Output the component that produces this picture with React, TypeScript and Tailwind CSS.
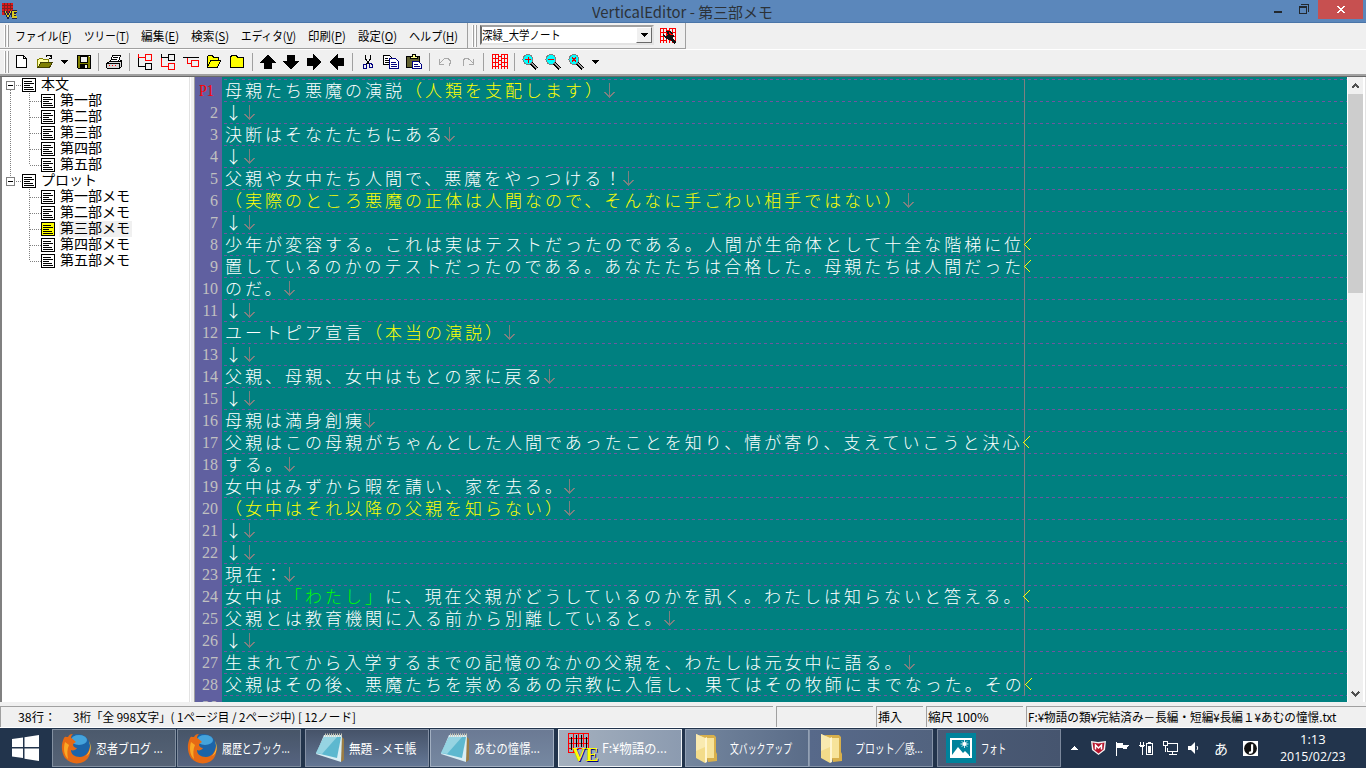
import { useLayoutEffect, useRef } from "react";
import type { ReactNode } from "react";

// Text squeezed or stretched to a fixed width
function Fit({ w, className = "", children }: { w: number; className?: string; children: ReactNode }) {
    const ref = useRef<HTMLSpanElement>(null);

    useLayoutEffect(() => {
        const el = ref.current;
        if (!el) return;
        el.style.transform = `scaleX(${w / el.offsetWidth})`;
    }, [w]);

    return (
        <span className={`block shrink-0 ${className}`} style={{ width: w }}>
            <span ref={ref} className="inline-block origin-left whitespace-pre">
                {children}
            </span>
        </span>
    );
}

const menus = [
    { label: "ファイル", key: "F", w: 57 },
    { label: "ツリー", key: "T", w: 45 },
    { label: "編集", key: "E", w: 38 },
    { label: "検索", key: "S", w: 38 },
    { label: "エディタ", key: "V", w: 55 },
    { label: "印刷", key: "P", w: 38 },
    { label: "設定", key: "O", w: 39 },
    { label: "ヘルプ", key: "H", w: 49 },
];

const tree = [
    { label: "本文", children: ["第一部", "第二部", "第三部", "第四部", "第五部"] },
    { label: "プロット", children: ["第一部メモ", "第二部メモ", "第三部メモ", "第四部メモ", "第五部メモ"] },
];
const selected = "第三部メモ";

type Line = { t: string; wrap?: boolean };

// （…） is drawn in yellow and 「…」 in green
const lines: Line[] = [
    { t: "母親たち悪魔の演説（人類を支配します）" },
    { t: "↓" },
    { t: "決断はそなたたちにある" },
    { t: "↓" },
    { t: "父親や女中たち人間で、悪魔をやっつける！" },
    { t: "（実際のところ悪魔の正体は人間なので、そんなに手ごわい相手ではない）" },
    { t: "↓" },
    { t: "少年が変容する。これは実はテストだったのである。人間が生命体として十全な階梯に位", wrap: true },
    { t: "置しているのかのテストだったのである。あなたたちは合格した。母親たちは人間だった", wrap: true },
    { t: "のだ。" },
    { t: "↓" },
    { t: "ユートピア宣言（本当の演説）" },
    { t: "↓" },
    { t: "父親、母親、女中はもとの家に戻る" },
    { t: "↓" },
    { t: "母親は満身創痍" },
    { t: "父親はこの母親がちゃんとした人間であったことを知り、情が寄り、支えていこうと決心", wrap: true },
    { t: "する。" },
    { t: "女中はみずから暇を請い、家を去る。" },
    { t: "（女中はそれ以降の父親を知らない）" },
    { t: "↓" },
    { t: "↓" },
    { t: "現在：" },
    { t: "女中は「わたし」に、現在父親がどうしているのかを訊く。わたしは知らないと答える。", wrap: true },
    { t: "父親とは教育機関に入る前から別離していると。" },
    { t: "↓" },
    { t: "生まれてから入学するまでの記憶のなかの父親を、わたしは元女中に語る。" },
    { t: "父親はその後、悪魔たちを崇めるあの宗教に入信し、果てはその牧師にまでなった。その", wrap: true },
];

function Svg({ children, w = 16, h = 16, className = "" }: { children: ReactNode; w?: number; h?: number; className?: string }) {
    return (
        <svg width={w} height={h} viewBox={`0 0 ${w} ${h}`} fill="none" shapeRendering="crispEdges" className={`shrink-0 ${className}`}>
            {children}
        </svg>
    );
}

function Btn({ children }: { children: ReactNode }) {
    return <div className="flex w-[23px] shrink-0 items-center justify-center pl-px">{children}</div>;
}

function Sep({ className = "w-2" }: { className?: string }) {
    return (
        <div className={`flex shrink-0 justify-center ${className}`}>
            <div className="h-[18px] w-px bg-[#a0a0a0]" />
        </div>
    );
}

function Grip() {
    return (
        <div className="flex h-[22px] w-[6px] shrink-0 gap-px">
            <div className="w-[2px] border-r border-[#a0a0a0] bg-white" />
            <div className="w-[2px] border-r border-[#a0a0a0] bg-white" />
        </div>
    );
}

function Caret() {
    return (
        <Svg w={7} h={4}>
            <path d="M0 0h7v1H0zM1 1h5v1H1zM2 2h3v1H2zM3 3h1v1H3z" fill="#000" />
        </Svg>
    );
}

function GridIcon() {
    return (
        <Svg>
            <path d="M0 .5h7M9 .5h7M0 4.5h7M9 4.5h7M0 8.5h7M9 8.5h7M0 12.5h7M9 12.5h7M.5 0v15M3.5 0v15M6.5 0v15M9.5 0v15M12.5 0v15M15.5 0v15M6 2.5h4M6 6.5h4M6 10.5h4" stroke="#f00" />
        </Svg>
    );
}

function ZoomIcon({ d, thick = false }: { d: string; thick?: boolean }) {
    return (
        <Svg>
            <path d="M9 9l6 6" stroke="#000" strokeWidth="3.6" />
            <path d="M10 9.5l5 5" stroke="#a0a0a0" strokeWidth="1.2" />
            <circle cx="6" cy="5.5" r="5" fill="#0ff" stroke="#808080" />
            <path d={d} stroke="#e00000" strokeWidth={thick ? 1.8 : 1} />
        </Svg>
    );
}

function Arrow({ turn }: { turn: string }) {
    return (
        <Svg className={turn}>
            <path d="M7 1h2v1h1v1h1v1h1v1h1v1h1v1h1v1h1v1h-4v6H4V9H0V8h1V7h1V6h1V5h1V4h1V3h1V2h1z" fill="#000" />
        </Svg>
    );
}

function TitleBar() {
    return (
        <div className="flex h-[23px] border-b border-[#4a75a8] bg-[#5b87bb]">
            <Svg w={18} h={17} className="mt-[2px] ml-[2px]">
                <rect y="1" width="11" height="12" fill="#e01818" />
                <path d="M0 3.5h11M0 6.5h11M0 9.5h11M2.5 1v12M5.5 1v12M8.5 1v12" stroke="#802020" />
                <path d="M3 9l3 6 3-6M10 9v6M10 9.5h5M10 12.5h4M10 15h5" stroke="#202040" strokeWidth="3" />
                <path d="M3 9l3 6 3-6M11 9v6M10 9.5h5M10 12.5h4M10 15h5" stroke="#d8c820" strokeWidth="1.3" />
            </Svg>
            <Fit w={181} className="ml-[572px] text-[15px] leading-[24px] text-[#2c3238]">VerticalEditor - 第三部メモ</Fit>
            <div className="flex-1" />
            <Svg w={9} h={3} className="mt-[11px] mr-[16px]">
                <path d="M0 0h8v2H0z" fill="#22282e" />
            </Svg>
            <Svg w={11} h={11} className="mt-[4px] mr-[8px]">
                <path d="M2 .5h7.5V8M.5 2v7.5h7V3" stroke="#22282e" />
                <path d="M0 3h8" stroke="#22282e" strokeWidth="2" />
            </Svg>
            <div className="mr-[3px] flex h-[19px] w-[45px] items-center justify-center bg-[#c75050]">
                <Svg w={8} h={7}>
                    <path d="M0 0h2v1h1v1h2V1h1V0h2v1H7v1H6v1H5v1h1v1h1v1h1v1H6V6H5V5H3v1H2v1H0V6h1V5h1V4h1V3H2V2H1V1H0z" fill="#fff" />
                </Svg>
            </div>
        </div>
    );
}

function MenuBar() {
    return (
        <div className="flex h-[27px] border-b border-white">
            <div className="flex w-[468px] border-r border-b border-[#a0a0a0] pt-[2px] pl-1">
                <Grip />
                <div className="ml-[5px] flex gap-3 text-[12px] leading-[21px]">
                    {menus.map((m) => (
                        <Fit key={m.key} w={m.w}>
                            {m.label}(<span className="underline underline-offset-2">{m.key}</span>)
                        </Fit>
                    ))}
                </div>
            </div>
            <div className="flex w-[218px] border-r border-b border-[#a0a0a0] pt-[2px] pl-1">
                <Grip />
                <div className="ml-[2px] flex h-[20px] w-[174px] border-2 border-[#e3e3e3] border-t-[#a0a0a0] border-l-[#696969] bg-white">
                    <Fit w={79} className="text-[12px] leading-[15px]">深緑_大学ノート</Fit>
                    <div className="ml-auto flex w-[16px] items-center justify-center border border-t-white border-r-[#696969] border-b-[#696969] border-l-white bg-[#f0f0f0]">
                        <Caret />
                    </div>
                </div>
                <div className="relative mt-[3px] ml-[6px] h-4 w-4">
                    <GridIcon />
                    <Svg className="absolute top-0 left-0">
                        <path d="M3 6l3 2 2-1-2-4h4l3 2 1 3-1 3 3 3-2 2-4-4-4-1-3-3z" fill="#111" />
                        <path d="M9 4l2 3 2-1" stroke="#f00" />
                    </Svg>
                </div>
            </div>
        </div>
    );
}

function Toolbar() {
    return (
        <div className="flex h-[24px] pl-1">
            <div className="w-[6px] shrink-0 pt-px"><Grip /></div>
            <Btn>
                <Svg>
                    <path d="M2.5 1.5h7l3 3v9h-10zM9.5 1.5v3h3" fill="#fff" stroke="#000" />
                </Svg>
            </Btn>
            <Btn>
                <Svg>
                    <path d="M.5 13.5v-8h1l1-1h3l1 1h5v3" fill="#ffffa0" stroke="#808000" />
                    <path d="M1 13.5l3-5h11.5l-3 5z" fill="#808000" stroke="#404000" />
                    <path d="M9 2.5l1-1h3l1 1M14.5 1v4M12 4.500h3" stroke="#000" />
                </Svg>
            </Btn>
            <div className="flex w-[16px] shrink-0 items-center justify-center"><Caret /></div>
            <Btn>
                <Svg>
                    <path d="M1.5 1.5h13v13h-12l-1-1z" fill="#808000" stroke="#000" />
                    <path d="M4.500 2h7v6h-7z" fill="#f0f0f0" stroke="#000" />
                    <path d="M4 10h8v4H4z" fill="#000" />
                    <path d="M9 11h2v3H9zM13 2h1v1h-1z" fill="#f0f0f0" />
                </Svg>
            </Btn>
            <Sep className="w-[7px] pt-[3px]" />
            <Btn>
                <Svg>
                    <path d="M4.5 7.5l2-6h8l-2 6" fill="#fff" stroke="#000" />
                    <path d="M7 3.5h5M6 5.5h5" stroke="#000" />
                    <path d="M.5 9.5l3-2h10l2-1v6l-2 2h-12l-1-1z" fill="#d8d8d8" stroke="#000" />
                    <path d="M1 9.5h12M13.5 9v5" stroke="#000" />
                    <path d="M3 11.5h9" stroke="#f00" strokeDasharray="1 2" />
                </Svg>
            </Btn>
            <Sep className="w-2 pt-[3px]" />
            <Btn>
                <Svg>
                    <path d="M1.5 4v8.5H8M8.5 9.5h6v6h-6z" stroke="#000" />
                    <path d="M1.500 0v4M1 3.5h7M8.5.5h6v6h-6z" stroke="#f00" />
                </Svg>
            </Btn>
            <Btn>
                <Svg>
                    <path d="M1.5 4v8.5H8M8.5 9.5h6v6h-6z" stroke="#f00" />
                    <path d="M1.500 0v4M1 3.5h7M8.5.5h6v6h-6z" stroke="#000" />
                </Svg>
            </Btn>
            <Btn>
                <Svg>
                    <path d="M0 3.5h16" stroke="#000" />
                    <path d="M4.5 4v5.5H9M8.5 6.5h7v6h-7z" stroke="#f00" />
                </Svg>
            </Btn>
            <Btn>
                <Svg>
                    <path d="M1.5 13.5v-11l1-1h4l1 2h5v3" fill="#ff0" stroke="#000" />
                    <path d="M1.5 13.5l3-7h10l-3 7z" fill="#ff0" stroke="#000" />
                </Svg>
            </Btn>
            <Btn>
                <Svg>
                    <path d="M1.5 13.5v-10l1-2h5l1 2h6v10z" fill="#ff0" stroke="#000" />
                </Svg>
            </Btn>
            <Sep className="w-2 pt-[3px]" />
            <Btn><Arrow turn="" /></Btn>
            <Btn><Arrow turn="rotate-180" /></Btn>
            <Btn><Arrow turn="rotate-90" /></Btn>
            <Btn><Arrow turn="-rotate-90" /></Btn>
            <Sep className="w-2 pt-[3px]" />
            <Btn>
                <Svg>
                    <path d="M5.5 1v4l4 5M10.5 1v4l-4 5" stroke="#000" />
                    <path d="M4 10.5h2v4H4l-1-1v-2zM9 9.5h2l1 1v3h-3z" stroke="#000080" />
                </Svg>
            </Btn>
            <Btn>
                <Svg>
                    <path d="M.5 1.5h6l2 2v7h-8z" fill="#fff" stroke="#000" />
                    <path d="M2 4.5h3M2 6.5h4M2 8.5h4" stroke="#000" />
                    <path d="M6.5 4.5h6l3 3v7h-9z" fill="#fff" stroke="#000080" />
                    <path d="M8 8.5h5M8 10.5h6M8 12.5h6" stroke="#000080" />
                </Svg>
            </Btn>
            <Btn>
                <Svg>
                    <path d="M.5 2.5h13v11H.5z" fill="#606030" stroke="#000" />
                    <path d="M4 4.5v-2h2v-2h3v2h2v2z" fill="#ffff90" stroke="#000" />
                    <path d="M6.5 7.5h6l3 3v4h-9z" fill="#fff" stroke="#000080" />
                    <path d="M8 10.5h4M8 12.5h6" stroke="#000080" />
                </Svg>
            </Btn>
            <Sep className="w-2 pt-[3px]" />
            <Btn>
                <Svg>
                    <path d="M2.5 5v5H7M3 9l3-3 2-1.5h3l2 2v3l-1 2" stroke="#a8a8a8" />
                </Svg>
            </Btn>
            <Btn>
                <Svg>
                    <path d="M13.5 5v5H9M13 9l-3-3-2-1.5H5l-2 2v3l1 2" stroke="#a8a8a8" />
                </Svg>
            </Btn>
            <Sep className="w-[9px] pt-[3px]" />
            <Btn><GridIcon /></Btn>
            <Sep className="w-[7px] pt-[3px]" />
            <Btn><ZoomIcon d="M3 5.5h6M6.500 3v6" /></Btn>
            <Btn><ZoomIcon d="M3 5.5h6" /></Btn>
            <Btn><ZoomIcon d="M4 3.5l4 4M8 3.5l-4 4" thick /></Btn>
            <div className="flex w-[16px] shrink-0 items-center justify-center"><Caret /></div>
        </div>
    );
}

function NodeIcon({ on = false }: { on?: boolean }) {
    return (
        <Svg w={14} h={14}>
            <rect x=".5" y=".5" width="13" height="13" fill={on ? "#ff0" : "#fff"} stroke="#000" />
            <path d="M2 3.5h8M2 5.5h10M2 7.5h6M2 9.5h9M2 11.5h10" stroke="#000" />
        </Svg>
    );
}

function Tree() {
    return (
        <div className="w-[190px] shrink-0 border-r border-l-2 border-r-[#e3e3e3] border-l-[#808080] bg-white pl-[4px] text-[14px] leading-[12px]">
            {tree.map((root, r) => (
                <div key={root.label}>
                    <div className="flex h-4 items-center">
                        <Svg w={16} h={16}>
                            <path d={r === 0 ? "M4.5 13v3" : "M4.5 0v4"} stroke="#808080" strokeDasharray="1 1" />
                            <path d="M.5 4.5h8v8h-8z" stroke="#808080" />
                            <path d="M2 8.5h5" stroke="#000" />
                            <path d="M10 8.5h6" stroke="#808080" strokeDasharray="1 1" />
                        </Svg>
                        <NodeIcon />
                        <Fit w={r === 0 ? 28 : 56} className="ml-[5px] h-4">{root.label}</Fit>
                    </div>
                    {root.children.map((c, i) => (
                        <div key={c} className="flex h-4 items-center">
                            <Svg w={35} h={16}>
                                {r === 0 && <path d="M4.5 0v16" stroke="#808080" strokeDasharray="1 1" />}
                                <path d={i === 4 ? "M23.5 0v8" : "M23.5 0v16"} stroke="#808080" strokeDasharray="1 1" />
                                <path d="M24 8.5h11" stroke="#808080" strokeDasharray="1 1" />
                            </Svg>
                            <NodeIcon on={c === selected} />
                            <div className={`ml-[4px] pr-[3px] ${c === selected ? "bg-[#f0f0f0]" : ""}`}>
                                <Fit w={c.length * 14} className="h-4 pl-px">{c}</Fit>
                            </div>
                        </div>
                    ))}
                </div>
            ))}
        </div>
    );
}

function EditorLine({ line }: { line: Line }) {
    const parts = line.t.split(/(（[^）]*）|「[^」]*」)/).filter(Boolean);
    return (
        <div className="flex h-[22px] shrink-0 pl-[3px] text-[17px] leading-[21px] font-light tracking-[3px]">
            {parts.map((p, i) => (
                <span key={i} className={p[0] === "（" ? "text-[#ffff00]" : p[0] === "「" ? "text-[#00ff00]" : "text-white"}>
                    {/* every character sits in its own 20px cell */}
                    {p === "↓" ? (
                        <span className="flex h-[22px] w-5">
                            <span className="w-[17px] text-center tracking-normal">↓</span>
                        </span>
                    ) : p}
                </span>
            ))}
            {line.wrap ? (
                <Svg w={7} h={13} className="mt-[5px]">
                    <path d="M6.5.5l-6 6 6 6" stroke="#ffff00" strokeWidth="1.2" />
                </Svg>
            ) : (
                <Svg w={11} h={16} className="-ml-px mt-[3px]">
                    <path d="M5.5 1v14M.5 10l5 5 5-5" stroke="#808080" />
                </Svg>
            )}
        </div>
    );
}

function Editor() {
    return (
        <div className="flex min-w-0 flex-1 overflow-hidden border-l border-[#a0a0a0] bg-[#008080]">
            <div className="w-[27px] shrink-0 bg-[#6060a0] pt-[2px] pr-[4px] text-right font-['Liberation_Serif',serif] text-[16px] leading-[24px] text-[#c0c0c0]">
                {[...Array(29)].map((_, i) => (
                    <div key={i} className="h-[22px]">
                        {i === 0 ? <Fit w={15} className="ml-[4px] text-left text-[#ff0000]">P1</Fit> : i + 1}
                    </div>
                ))}
            </div>
            <div className="relative flex-1 pt-[2px]">
                <div className="absolute top-[2px] left-0 h-[623px] w-full bg-[repeating-linear-gradient(90deg,transparent_0_2px,#7055a0_2px_5px,transparent_5px_6px)]">
                    <div className="h-full w-full bg-[repeating-linear-gradient(180deg,transparent_0_1px,#008080_1px_22px)]" />
                </div>
                <div className="absolute top-[2px] left-[802px] h-[617px] w-px bg-[#808080]" />
                <div className="relative">
                    {lines.map((l, i) => <EditorLine key={i} line={l} />)}
                </div>
            </div>
            <div className="flex w-[16px] flex-col items-center border-l border-white bg-[#f0f0f0]">
                <Svg w={9} h={6} className="mt-[6px]">
                    <path d="M1 5l3.5-3.5L8 5" stroke="#505050" strokeWidth="2" />
                </Svg>
                <div className="mt-[5px] h-[199px] w-full bg-[#cdcdcd]" />
                <Svg w={9} h={6} className="mt-auto mb-[5px]">
                    <path d="M1 1l3.5 3.5L8 1" stroke="#505050" strokeWidth="2" />
                </Svg>
            </div>
            <div className="w-[3px] border-r border-[#e3e3e3] bg-white" />
        </div>
    );
}

function StatusBar() {
    const cell = "h-[21px] shrink-0 border-t border-l border-[#a0a0a0] mr-[3px] flex";
    return (
        <div className="flex h-[26px] border-b border-white pt-[4px] text-[12px] leading-[19px]">
            <div className={`${cell} w-[773px] pl-[17px]`}>
                <Fit w={38}>38行：</Fit>
                <Fit w={283} className="ml-[17px]">3桁「全 998文字」( 1ページ目 / 2ページ中) [ 12ノード]</Fit>
            </div>
            <div className={`${cell} w-[97px]`} />
            <div className={`${cell} w-[47px] pl-px`}><Fit w={24}>挿入</Fit></div>
            <div className={`${cell} w-[97px] pl-px`}><Fit w={61}>縮尺 100%</Fit></div>
            <div className={`${cell} w-[340px] pl-px`}><Fit w={308}>F:¥物語の類¥完結済み－長編・短編¥長編１¥あむの憧憬.txt</Fit></div>
        </div>
    );
}

function Firefox() {
    return (
        <svg width="31" height="31" viewBox="0 0 31 31">
            <circle cx="16" cy="14.5" r="13.5" fill="#1c64a8" />
            <ellipse cx="18" cy="7" rx="8" ry="5" fill="#4fb3e8" opacity=".8" />
            <path d="M3 5C0 11 0 19 4 25c5 6 14 7 20 3 5-4 6-9 5-15-1 7-5 11-10 11-6 0-9-3-9-7 2 1 5 0 6-2-2 0-4-2-4-3 0-2 2-2 3-3-2-2-3-3-5-4 0-2 1-3 2-4-3 0-4 1-5 3-2 0-3-1-4 1z" fill="#e66a14" />
            <path d="M4 9c-2 7-1 13 3 17-1-5-1-10 1-14z" fill="#f9a825" />
            <path d="M28 8c2 6 1 11-3 15 5-2 6-10 3-15z" fill="#ffc233" />
        </svg>
    );
}

function Notepad() {
    return (
        <svg width="32" height="31" viewBox="0 0 32 31">
            <path d="M27 3l3 3v21l-3 2z" fill="#9b7d45" />
            <path d="M10 2h18l-1 27-25-8z" fill="#d9eef4" />
            <path d="M10 4h17l-4 21L2 20z" fill="#5db8cf" />
            <path d="M10 4h13L8 21l-6-1z" fill="#96d4e2" />
            <path d="M11 2h17" stroke="#c8c8b8" strokeWidth="3" strokeDasharray="1 1" />
        </svg>
    );
}

function VeIcon() {
    return (
        <svg width="32" height="32" viewBox="0 0 32 32" fill="none">
            <g shapeRendering="crispEdges">
                <path d="M1 1.5h21M1 6.5h21M1 11.5h21M1 16.5h21M1 20.5h8M1.5 1v20M6.5 1v20M11.5 1v14M16.5 1v14M21.5 1v16" stroke="#f00" />
                <path d="M4.5 5v13M9.5 3v12M14.5 3v12M19.5 5v12" stroke="#000" strokeWidth="1" />
            </g>
            <text x="6" y="30" fontFamily="Liberation Serif, serif" fontWeight="bold" fontSize="19" fill="#000080">VE</text>
            <text x="5" y="29" fontFamily="Liberation Serif, serif" fontWeight="bold" fontSize="19" fill="#ffff00">VE</text>
        </svg>
    );
}

function Folder() {
    return (
        <svg width="24" height="31" viewBox="0 0 24 31">
            <path d="M5 2h14l2 2v15l1 2v7l-9 1z" fill="#d8b04c" />
            <path d="M7 5h12v20H7z" fill="#f7e39a" />
            <path d="M1 1l9 4v25l-9-5z" fill="#f3dc8a" />
            <path d="M10 5l2-1v25l-2 1z" fill="#fff5cf" />
            <path d="M1 1l9 4v9L1 18z" fill="#f9eab0" />
        </svg>
    );
}

function Photo() {
    return (
        <svg width="30" height="30" viewBox="0 0 30 30">
            <rect width="30" height="30" fill="#00829b" />
            <path d="M4 5h22v20H4z" fill="#fff" />
            <path d="M6 7h18v16H6z" fill="#00829b" />
            <path d="M6 22l6-8 5 6 2-2 4 4v1H6z" fill="#fff" />
            <circle cx="18.5" cy="11" r="2" fill="#fff" />
            <path d="M18.5 7v8M14.500 11h8M15.700 8.200l5.600 5.600M21.300 8.200l-5.600 5.600" stroke="#fff" strokeWidth=".8" />
        </svg>
    );
}

const tasks = [
    { label: "忍者ブログ ...", w: 67, icon: <Firefox />, pad: "pl-[8px]", cls: "ml-[1px] bg-linear-to-b from-[#4b596c] to-[#566376] border-[#8390a1]" },
    { label: "履歴とブック...", w: 68, icon: <Firefox />, pad: "pl-[9px]", cls: "ml-[1px] bg-linear-to-b from-[#475568] to-[#566480] border-[#7d8a9c]" },
    { label: "無題 - メモ帳", w: 67, icon: <Notepad />, pad: "pl-[8px]", cls: "ml-[4px] bg-linear-to-b from-[#465369] to-[#647795] border-[#8490a4]" },
    { label: "あむの憧憬...", w: 66, icon: <Notepad />, pad: "pl-[8px]", cls: "ml-[1px] bg-linear-to-b from-[#6b7a94] to-[#7688a1] border-[#a2afc1]" },
    { label: "F:¥物語の...", w: 65, icon: <VeIcon />, pad: "pl-[8px]", cls: "ml-[4px] bg-linear-to-r from-[#a4b0be] to-[#8c9bb0] border-[#eef2f6]" },
    { label: "文バックアップ", w: 62, icon: <Folder />, pad: "pl-[9px]", cls: "ml-[3px] bg-linear-to-r from-[#74869e] to-[#5a6c88] border-[#93a1b5]" },
    { label: "プロット／感...", w: 68, icon: <Folder />, pad: "pl-[10px]", cls: "bg-linear-to-r from-[#57698a] to-[#52637f] border-[#8593a8]" },
    { label: "フォト", w: 25, icon: <Photo />, pad: "pl-[8px]", cls: "ml-[4px] bg-linear-to-r from-[#4b5b76] to-[#46556f] border-[#7b889c]" },
];

function Taskbar() {
    return (
        <div className="flex h-10 bg-[#22344c] text-[13px] text-white">
            <div className="flex w-[51px] shrink-0 items-center justify-center">
                <svg width="27" height="26" viewBox="0 0 27 26" fill="#fff">
                    <path d="M0 4l11-1.500V12H0zM12.500 2.300L27 0v12H12.500zM0 13.500h11V23L0 21.500zM12.500 13.500H27V26l-14.500-2.300z" />
                </svg>
            </div>
            {tasks.map((t, i) => (
                <div key={i} className={`mt-px flex h-[38px] w-[124px] shrink-0 items-center border ${t.cls} ${t.pad}`}>
                    <div className="flex w-[35px] shrink-0">{t.icon}</div>
                    <Fit w={t.w} className="-mt-px">{t.label}</Fit>
                </div>
            ))}
            <div className="flex flex-1 items-center pl-[10px]">
                <Svg w={7} h={4}>
                    <path d="M3 0h1v1h1v1h1v1h1v1H0V3h1V2h1V1h1z" fill="#fff" />
                </Svg>
                <svg width="15" height="16" viewBox="0 0 15 16" className="ml-[13px]">
                    <path d="M0 1l7 1 8-1-1 9-6.500 5L1 10z" fill="#f4f4f4" />
                    <path d="M1.500 2.500l6 1 6-1-1 7-5 4-5-4z" fill="#b5142c" />
                    <path d="M4.500 9.500V5l3 3 3-3v4.500" fill="none" stroke="#fff" strokeWidth="1.500" />
                </svg>
                <Svg w={15} h={15} className="ml-[9px]">
                    <path d="M1.500 1v14" stroke="#fff" strokeWidth="1" />
                    <path d="M2 2h6v2h6l-2 2 0 2H8V7H2z" fill="#fff" />
                </Svg>
                <Svg w={15} h={16} className="ml-[9px]">
                    <path d="M1.500 2v3M4.500 2v3M0 5.500h6M1 6.500h4M3.500 6v9" stroke="#fff" />
                    <path d="M7.500 3.500h6v11h-6zM9 2.500h3" stroke="#fff" />
                    <path d="M9 6h3v7H9z" fill="#fff" />
                </Svg>
                <Svg w={15} h={16} className="ml-[9px]">
                    <path d="M5 3.500h9.500v8H4.500V8M6 14.500h8M9.500 12v2M.500 1.500h4v4h-4zM2.500 6v6" stroke="#fff" />
                </Svg>
                <svg width="14" height="14" viewBox="0 0 14 14" className="ml-[10px]" fill="none">
                    <path d="M0 5h3l4-4v12L3 9H0z" fill="#fff" />
                    <path d="M9 5q1.500 2 0 4" stroke="#fff" />
                </svg>
                <span className="ml-[12px] w-[14px] text-[14px]">あ</span>
                <svg width="15" height="15" viewBox="0 0 14 14" className="ml-[15px]">
                    <rect width="14" height="14" fill="#fff" />
                    <circle cx="7" cy="7" r="6" fill="#111" />
                    <path d="M8.500 3v6q0 2-3 2" fill="none" stroke="#fff" strokeWidth="2" />
                </svg>
                <div className="ml-[20px] flex w-[70px] flex-col items-center font-['Open_Sans','Noto_Sans_CJK_JP',sans-serif] text-[12px] leading-[17px]">
                    <Fit w={26}>1:13</Fit>
                    <Fit w={66}>2015/02/23</Fit>
                </div>
            </div>
        </div>
    );
}

export default function App() {
    return (
        <div className="flex h-[768px] w-[1366px] flex-col overflow-hidden bg-[#f0f0f0] font-['Noto_Sans_CJK_JP',sans-serif] text-black">
            <TitleBar />
            <MenuBar />
            <Toolbar />
            <div className="h-[3px] shrink-0 border-b border-[#696969] bg-[#a0a0a0]" />
            <div className="flex h-[625px] shrink-0">
                <Tree />
                <div className="w-[4px] shrink-0 border-l border-white" />
                <Editor />
            </div>
            <StatusBar />
            <Taskbar />
        </div>
    );
}
